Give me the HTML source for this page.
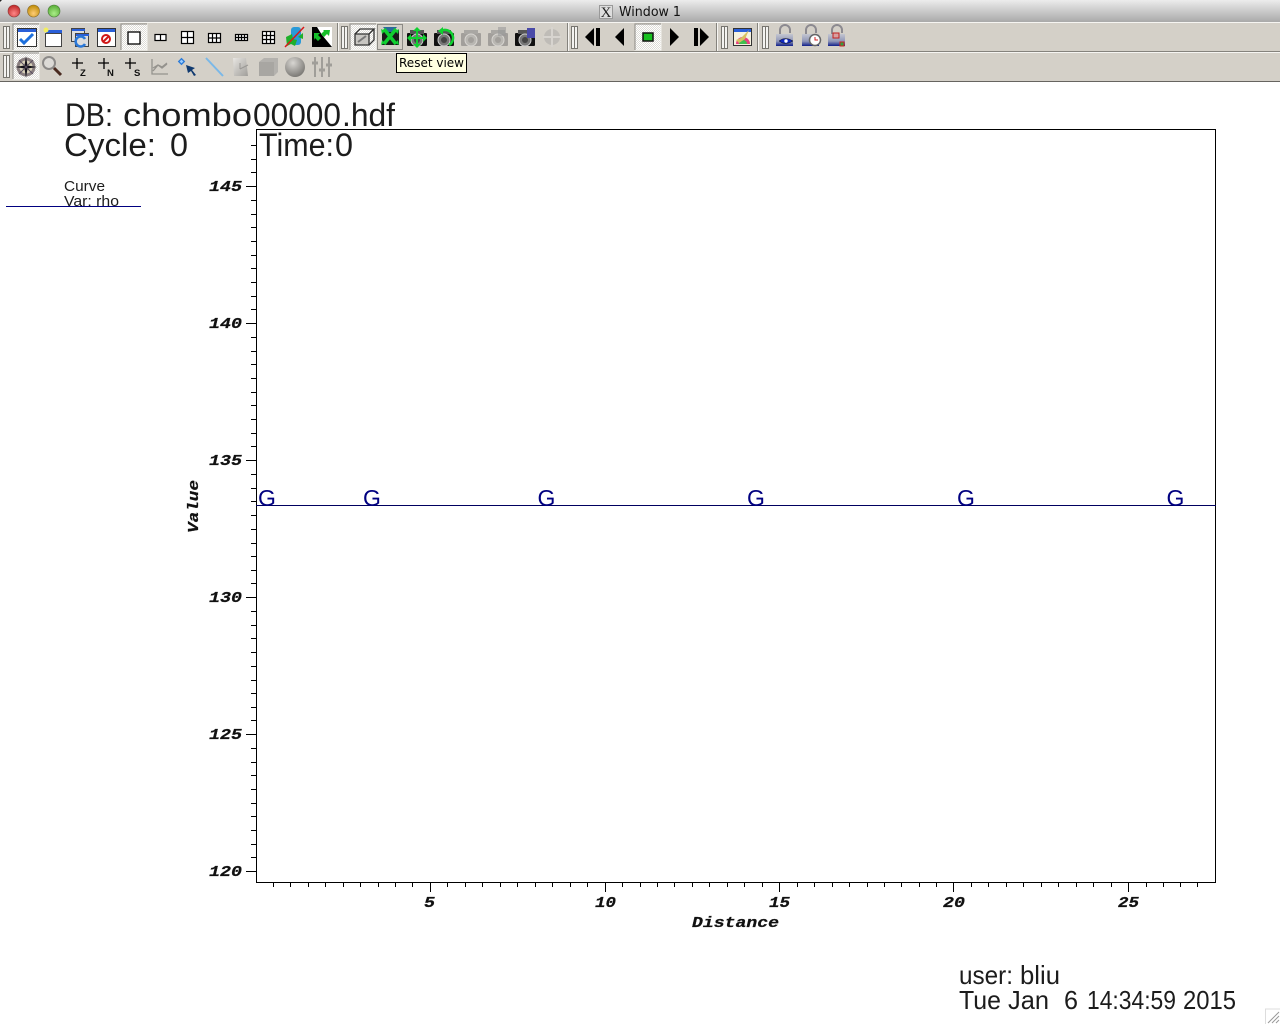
<!DOCTYPE html>
<html><head><meta charset="utf-8"><title>Window 1</title>
<style>html,body{margin:0;padding:0;background:#fff;width:1280px;height:1024px;overflow:hidden}svg{display:block}
.big{font-family:"Liberation Sans",sans-serif;fill:#1c1c1c}
.lb{font-family:"Liberation Mono",monospace;font-weight:bold;font-style:italic;font-size:15px;fill:#111;stroke:#111;stroke-width:.25}
</style></head><body>
<svg width="1280" height="1024" viewBox="0 0 1280 1024" xmlns="http://www.w3.org/2000/svg">
<defs>
<linearGradient id="tb" x1="0" y1="0" x2="0" y2="1"><stop offset="0" stop-color="#ececec"/><stop offset="1" stop-color="#a9a9a9"/></linearGradient>
<pattern id="ck" width="2" height="2" patternUnits="userSpaceOnUse"><rect width="2" height="2" fill="#dedcd7"/><rect width="1" height="1" fill="#fff"/><rect x="1" y="1" width="1" height="1" fill="#fff"/></pattern>
<linearGradient id="gb" x1="0" y1="0" x2="1" y2="1"><stop offset="0" stop-color="#e8e6e2"/><stop offset="1" stop-color="#a09e9a"/></linearGradient>
<linearGradient id="lk" x1="0" y1="0" x2="0" y2="1"><stop offset="0" stop-color="#c4c6d0"/><stop offset=".6" stop-color="#8f96b8"/><stop offset="1" stop-color="#101f8a"/></linearGradient>
<radialGradient id="sp" cx=".4" cy=".3" r=".8"><stop offset="0" stop-color="#d8d6d2"/><stop offset="1" stop-color="#6f6d69"/></radialGradient>
<radialGradient id="r" cx=".5" cy=".7" r=".7"><stop offset="0" stop-color="#f88"/><stop offset="1" stop-color="#b22"/></radialGradient>
<radialGradient id="y" cx=".5" cy=".7" r=".7"><stop offset="0" stop-color="#fc7"/><stop offset="1" stop-color="#b80"/></radialGradient>
<radialGradient id="g" cx=".5" cy=".7" r=".7"><stop offset="0" stop-color="#ae8"/><stop offset="1" stop-color="#5a3"/></radialGradient>
<g id="hd"><rect x="0" y="0" width="6" height="22" fill="#f4f3f0" stroke="#77756f" stroke-width="1"/><line x1="3" y1="0" x2="3" y2="22" stroke="#77756f"/></g>
<g id="act"><rect x="-13" y="-13" width="26" height="26" fill="url(#ck)" stroke="#f5f4f1"/><path d="M-13 13V-13H13" fill="none" stroke="#8c8a85"/></g>
<g id="cam"><rect x="-10" y="-5" width="20" height="13" rx="1" fill="#111"/><rect x="-7" y="-8" width="14" height="4" fill="#555"/><circle cx="0" cy="2" r="6" fill="#777" stroke="#ccc" stroke-width="1"/><circle cx="0" cy="2" r="3" fill="#444"/></g>
<g id="camg" opacity=".45"><rect x="-10" y="-5" width="20" height="13" rx="1" fill="#666"/><rect x="-7" y="-8" width="14" height="4" fill="#777"/><circle cx="0" cy="2" r="6" fill="#999" stroke="#ddd"/><circle cx="0" cy="2" r="3" fill="#666"/></g>
<g id="lock"><path d="M-5 -1V-6a5 5 0 0 1 10 0v3" fill="none" stroke="#8c8a90" stroke-width="2"/><rect x="-9" y="-2" width="17" height="12" fill="url(#lk)"/></g>
</defs>

<!-- title bar -->
<rect width="1280" height="22" fill="url(#tb)"/>
<path d="M0 0h2L0 2z" fill="#222"/>
<circle cx="14" cy="11" r="6" fill="url(#r)" stroke="#8a3a3a" stroke-width=".6"/>
<circle cx="33.500" cy="11" r="6" fill="url(#y)" stroke="#8a6a2a" stroke-width=".6"/>
<circle cx="54" cy="11" r="6" fill="url(#g)" stroke="#4a7a3a" stroke-width=".6"/>
<rect x="599.500" y="5.500" width="13" height="13" fill="#ddd" stroke="#999"/>
<text x="606" y="17" font-family="Liberation Serif,serif" font-size="15" text-anchor="middle" fill="#222">X</text>
<text x="619" y="16" font-family="DejaVu Sans,sans-serif" font-size="13" fill="#111" textLength="62" lengthAdjust="spacingAndGlyphs">Window 1</text>

<!-- toolbars -->
<rect y="22" width="1280" height="60" fill="#d4d0c8"/>
<rect y="22" width="1280" height="1" fill="#f6f5f2"/>
<rect y="51" width="1280" height="1" fill="#85837d"/>
<rect y="52" width="1280" height="1" fill="#f6f5f2"/>
<rect y="81" width="1280" height="1" fill="#66645f"/>
<g fill="#f6f5f2"><rect x="338" y="23" width="1" height="28"/><rect x="568" y="23" width="1" height="28"/><rect x="717" y="23" width="1" height="28"/><rect x="758" y="23" width="1" height="28"/></g>
<g fill="#85837d"><rect x="337" y="23" width="1" height="28"/><rect x="567" y="23" width="1" height="28"/><rect x="716" y="23" width="1" height="28"/><rect x="757" y="23" width="1" height="28"/></g>
<use href="#hd" x="3.500" y="26.500"/><use href="#hd" x="3.500" y="55.500"/>
<use href="#hd" x="341.500" y="26.500"/><use href="#hd" x="571.500" y="26.500"/><use href="#hd" x="721.500" y="26.500"/><use href="#hd" x="762.500" y="26.500"/>

<!-- row 1 -->
<use href="#act" x="26" y="37"/>
<g><rect x="17.500" y="28.500" width="19" height="18" fill="#fff" stroke="#333"/><rect x="18" y="29" width="18" height="3" fill="#2a5fd8"/><path d="M20 39l4 4 9-9" fill="none" stroke="#1c6fdc" stroke-width="3"/></g>
<g><rect x="45.500" y="33.500" width="16" height="13" fill="#fff" stroke="#444"/><rect x="46" y="30" width="16" height="3" fill="#2a5fd8"/><circle cx="46" cy="30" r="2.500" fill="#f2ee60"/></g>
<g><rect x="71.500" y="28.500" width="13" height="13" fill="#ddd" stroke="#444"/><rect x="72" y="29" width="13" height="2" fill="#2a5fd8"/><rect x="75.500" y="33.500" width="13" height="13" fill="#ddd" stroke="#444"/><rect x="76" y="34" width="13" height="2" fill="#2a5fd8"/><path d="M85 39a5 5 0 1 0 0 5" fill="none" stroke="#2a78d8" stroke-width="2.500"/></g>
<g><rect x="97.500" y="28.500" width="18" height="18" fill="#fff" stroke="#333"/><rect x="98" y="29" width="17" height="3" fill="#2a5fd8"/><circle cx="106" cy="39" r="4" fill="none" stroke="#d01818" stroke-width="2"/><line x1="103" y1="42" x2="109" y2="36" stroke="#d01818" stroke-width="2"/></g>
<use href="#act" x="134" y="37"/>
<rect x="128" y="32" width="12" height="12" fill="#fff" stroke="#000" stroke-width="1.300"/>
<g fill="#fff" stroke="#000" stroke-width="1.200"><rect x="155" y="34.500" width="11" height="6"/><line x1="160.500" y1="34" x2="160.500" y2="41"/>
<rect x="181.500" y="31.500" width="12" height="12"/><path d="M187.500 31v13M181 37.500h13"/>
<rect x="208.500" y="33.500" width="12" height="9"/><path d="M212.500 33v10M216.500 33v10M208 38h13"/>
<rect x="235.500" y="34.500" width="12" height="6"/><path d="M238.500 34v7M241.500 34v7M244.500 34v7M235 37.500h13"/>
<rect x="262.500" y="31.500" width="12" height="12"/><path d="M266.500 31v13M270.500 31v13M262 35.500h13M262 39.500h13"/></g>
<g><rect x="291" y="27" width="10" height="18" rx="3" fill="#2a9ad8"/><path d="M286 37l6-3 1 5 4 1-2 6-4-2-4 2z" fill="#1fb02a"/><path d="M303 33v6l-5-2z" fill="#1fb02a"/><line x1="285" y1="47" x2="304" y2="27" stroke="#d81818" stroke-width="1.500"/></g>
<g><rect x="312" y="27" width="20" height="20" fill="#fff"/><path d="M312 27h5l5 8 10 12h-20z" fill="#000"/><path d="M314 33l6 0-2 2 3 3-3 3-3-3-1 2zM330 30l-1 6-2-2-3 3-3-3 3-3-1-1z" fill="#17c02a"/></g>

<use href="#act" x="363" y="37"/>
<g fill="none" stroke="#333" stroke-width="1.300"><path d="M355 34h14v11h-14z" fill="#c8c6c2"/><path d="M355 34l5-5h14l-5 5M369 45l5-5V29"/><path d="M358 42l8-6" stroke="#777" stroke-width="2"/></g>
<rect x="377.500" y="24.500" width="25" height="25" fill="#d4d0c8" stroke="#8c8a85"/>
<g><rect x="382" y="30" width="17" height="15" fill="#1a1a1a"/><path d="M383 27h14l-4 5h-6z" fill="#2a6a9a"/><path d="M384 29l12 15M396 29l-12 15" stroke="#10d030" stroke-width="3.500"/><path d="M381 29l4 2-3 3zM399 29l-4 2 3 3zM381 45l4-2-3-3zM399 45l-4-2 3-3z" fill="#10d030"/></g>

<use href="#cam" x="417" y="38"/>
<path d="M417 29v16M409 38h16" stroke="#10d030" stroke-width="2"/><path d="M413 31l4-4 4 4zM413 44l4 4 4-4zM411 34l-4 4 4 4zM423 34l4 4-4 4z" fill="#10d030"/>
<use href="#cam" x="444" y="38"/>
<path d="M441 31a8 8 0 0 1 8 14" fill="none" stroke="#10d030" stroke-width="2.500"/><path d="M443 27v8l-5-4z" fill="#10d030"/>
<use href="#camg" x="471" y="38"/>
<use href="#camg" x="498" y="38"/><rect x="498" y="27" width="8" height="9" fill="#999" opacity=".6"/>
<use href="#cam" x="525" y="38"/><rect x="527" y="28" width="8" height="10" fill="#4a4aa8"/>
<g opacity=".35"><circle cx="552" cy="37" r="8" fill="#999"/><path d="M552 27v20M543 37h18" stroke="#ddd" stroke-width="2"/></g>

<g fill="#000"><path d="M594 28v18l-9-9z"/><rect x="596" y="28" width="4" height="18"/><path d="M624 28v18l-9-9z"/><path d="M670 28v18l9-9z"/><rect x="694" y="28" width="4" height="18"/><path d="M700 28v18l9-9z"/></g>
<use href="#act" x="648" y="37"/>
<rect x="643" y="33" width="10" height="8" fill="#18c020" stroke="#111" stroke-width="1.500"/>

<g><rect x="733.500" y="28.500" width="18" height="17" fill="#f6f2e0" stroke="#333"/><rect x="734" y="29" width="17" height="3" fill="#2a5fd8"/><path d="M736 44a7 7 0 0 1 14 0z" fill="#e84080"/><path d="M739 44a4 4 0 0 1 8 0z" fill="#40c050"/><path d="M749 30l-8 8-5 2 3 3 6-4z" fill="#d8c060"/></g>

<use href="#lock" x="785" y="36"/><path d="M779 41q6-5 14 0q-8 5-14 0z" fill="#1028c0" stroke="#111" stroke-width=".5"/><circle cx="786" cy="41" r="1.700" fill="#fff"/>
<use href="#lock" x="811" y="36"/><circle cx="815" cy="40" r="5.500" fill="#fff" stroke="#666" stroke-width="1.500"/><path d="M815 37v3h3" stroke="#d02020" fill="none"/>
<use href="#lock" x="837" y="36"/><rect x="833" y="33" width="6" height="5" fill="#d8a0a0" stroke="#c02020"/><rect x="840" y="42" width="4" height="4" fill="#30a040" stroke="#d02020"/>

<!-- row 2 -->
<use href="#act" x="26" y="66"/>
<circle cx="26" cy="67" r="9.500" fill="#8a7f80"/>
<circle cx="26" cy="67" r="6.500" fill="#d8d0b8"/>
<path d="M26 56l1.500 9.500 9.500 1.500-9.500 1.500-1.500 9.500-1.500-9.500-9.500-1.500 9.500-1.500z" fill="#14121a"/>
<path d="M19 60l7 7-7 7M33 60l-7 7 7 7" stroke="#5a5060" fill="none"/>
<g><circle cx="49" cy="63" r="6" fill="#dcdad6" stroke="#8c8a88" stroke-width="2"/><line x1="54" y1="68" x2="61" y2="75" stroke="#4a2a20" stroke-width="3"/></g>
<g stroke="#000" stroke-width="1.300" fill="none"><path d="M77 58v11M72 63h11M104 58v11M98 63h11M130 58v11M125 63h11"/></g>
<g font-family="Liberation Sans,sans-serif" font-weight="bold" font-size="9.500" fill="#111"><text x="80" y="76">Z</text><text x="107" y="76">N</text><text x="134" y="76">S</text></g>
<g fill="none" stroke="#94928d" stroke-width="1.300"><path d="M152 59v15h16M153 71l5-6 4 3 5-4M153 68l5-3 4 2 5-4"/></g>
<rect x="179.500" y="59.500" width="4" height="4" transform="rotate(45 181.500 61.500)" fill="#9cf" stroke="#2a7ad8" stroke-width="1.300"/>
<path d="M186 65l9 3-3 2 4 5-2 1-3-5-3 2z" fill="#103a70"/>
<line x1="206" y1="58" x2="223" y2="76" stroke="#7ab8e8" stroke-width="2"/>
<g><path d="M233 58h13l2 18h-14z" fill="url(#gb)"/><path d="M240 69l8-4M240 63v6" stroke="#9a9894"/></g>
<g><path d="M259 62l5-4h14v14l-4 4h-15z" fill="#b4b2ae"/><path d="M259 62h15v14h-15z" fill="#a8a6a2"/></g>
<circle cx="295" cy="67" r="10" fill="url(#sp)"/>
<g stroke="#a09e99" stroke-width="2"><path d="M315 57v20M322 57v20M329 57v20"/><path d="M312 63h6M319 70h6M326 65h6" stroke-width="3"/></g>

<!-- tooltip -->
<rect x="396.500" y="53.500" width="70" height="19" fill="#ffffe1" stroke="#000"/>
<text x="399" y="67" font-family="DejaVu Sans,sans-serif" font-size="12" fill="#000" textLength="65" lengthAdjust="spacingAndGlyphs">Reset view</text>

<!-- header text -->
<text class="big" y="126" font-size="32"><tspan x="65" textLength="48" lengthAdjust="spacingAndGlyphs">DB:</tspan> <tspan x="123" textLength="129" lengthAdjust="spacingAndGlyphs">chombo</tspan><tspan x="253" textLength="88" lengthAdjust="spacingAndGlyphs">00000</tspan><tspan x="342" textLength="53" lengthAdjust="spacingAndGlyphs">.hdf</tspan></text>
<text class="big" y="156" font-size="32"><tspan x="64" textLength="92" lengthAdjust="spacingAndGlyphs">Cycle:</tspan> <tspan x="170" textLength="18" lengthAdjust="spacingAndGlyphs">0</tspan></text>
<rect x="256.500" y="129.500" width="959" height="753" fill="none" stroke="#000"/>
<text class="big" y="156" font-size="32"><tspan x="259" textLength="75" lengthAdjust="spacingAndGlyphs">Time:</tspan><tspan x="335" textLength="18" lengthAdjust="spacingAndGlyphs">0</tspan></text>
<text class="big" x="64" y="191" font-size="14.500" textLength="41" lengthAdjust="spacingAndGlyphs">Curve</text>
<text class="big" x="64" y="206" font-size="14.500" textLength="55" lengthAdjust="spacingAndGlyphs">Var: rho</text>
<line x1="6" y1="206.500" x2="141" y2="206.500" stroke="#000080"/>

<!-- y ticks -->
<path stroke="#000" fill="none" d="M246 186.500h10M246 323.500h10M246 460.500h10M246 597.500h10M246 734.500h10M246 871.500h10
M251 145.500h5M251 159.500h5M251 172.500h5M251 200.500h5M251 214.500h5M251 227.500h5M251 241.500h5M251 255.500h5M251 268.500h5M251 282.500h5M251 296.500h5M251 309.500h5
M251 337.500h5M251 351.500h5M251 364.500h5M251 378.500h5M251 392.500h5M251 405.500h5M251 419.500h5M251 433.500h5M251 446.500h5
M251 474.500h5M251 488.500h5M251 501.500h5M251 515.500h5M251 529.500h5M251 543.500h5M251 556.500h5M251 570.500h5M251 583.500h5
M251 611.500h5M251 625.500h5M251 638.500h5M251 652.500h5M251 666.500h5M251 680.500h5M251 693.500h5M251 707.500h5M251 720.500h5
M251 748.500h5M251 762.500h5M251 775.500h5M251 789.500h5M251 803.500h5M251 816.500h5M251 830.500h5M251 844.500h5M251 857.500h5"/>
<!-- x ticks -->
<path stroke="#000" fill="none" d="M430.500 882v10M605.500 882v10M779.500 882v10M953.500 882v10M1128.500 882v10
M273.500 882v5M290.500 882v5M308.500 882v5M325.500 882v5M343.500 882v5M360.500 882v5M378.500 882v5M395.500 882v5M412.500 882v5
M447.500 882v5M465.500 882v5M482.500 882v5M500.500 882v5M517.500 882v5M535.500 882v5M552.500 882v5M570.500 882v5M587.500 882v5
M622.500 882v5M640.500 882v5M657.500 882v5M674.500 882v5M692.500 882v5M709.500 882v5M727.500 882v5M744.500 882v5M762.500 882v5
M797.500 882v5M814.500 882v5M832.500 882v5M849.500 882v5M867.500 882v5M884.500 882v5M901.500 882v5M919.500 882v5M936.500 882v5
M971.500 882v5M988.500 882v5M1006.500 882v5M1023.500 882v5M1041.500 882v5M1058.500 882v5M1076.500 882v5M1093.500 882v5M1111.500 882v5
M1146.500 882v5M1163.500 882v5M1180.500 882v5M1197.500 882v5"/>

<g>
<text x="209" y="191" class="lb" textLength="33" lengthAdjust="spacingAndGlyphs">145</text>
<text x="209" y="328" class="lb" textLength="33" lengthAdjust="spacingAndGlyphs">140</text>
<text x="209" y="465" class="lb" textLength="33" lengthAdjust="spacingAndGlyphs">135</text>
<text x="209" y="602" class="lb" textLength="33" lengthAdjust="spacingAndGlyphs">130</text>
<text x="209" y="739" class="lb" textLength="33" lengthAdjust="spacingAndGlyphs">125</text>
<text x="209" y="876" class="lb" textLength="33" lengthAdjust="spacingAndGlyphs">120</text>
<text x="424" y="907" class="lb" textLength="11" lengthAdjust="spacingAndGlyphs">5</text>
<text x="595" y="907" class="lb" textLength="21" lengthAdjust="spacingAndGlyphs">10</text>
<text x="769" y="907" class="lb" textLength="21" lengthAdjust="spacingAndGlyphs">15</text>
<text x="943" y="907" class="lb" textLength="22" lengthAdjust="spacingAndGlyphs">20</text>
<text x="1118" y="907" class="lb" textLength="21" lengthAdjust="spacingAndGlyphs">25</text>
<text x="692" y="927" class="lb" textLength="87" lengthAdjust="spacingAndGlyphs">Distance</text>
<text transform="translate(198 533) rotate(-90)" class="lb" textLength="53" lengthAdjust="spacingAndGlyphs">Value</text>
</g>

<!-- curve -->
<line x1="256" y1="505.500" x2="1216" y2="505.500" stroke="#000060"/>
<g font-family="Liberation Sans,sans-serif" font-size="23" fill="#000080" text-anchor="middle">
<text x="267" y="506">G</text><text x="372" y="506">G</text><text x="546.500" y="506">G</text><text x="756" y="506">G</text><text x="966" y="506">G</text><text x="1175.500" y="506">G</text>
</g>

<text class="big" y="984" font-size="26"><tspan x="959" textLength="54" lengthAdjust="spacingAndGlyphs">user:</tspan> <tspan x="1020" textLength="40" lengthAdjust="spacingAndGlyphs">bliu</tspan></text>
<text class="big" y="1009" font-size="26"><tspan x="959" textLength="42" lengthAdjust="spacingAndGlyphs">Tue</tspan> <tspan x="1008" textLength="41" lengthAdjust="spacingAndGlyphs">Jan</tspan> <tspan x="1064" textLength="14" lengthAdjust="spacingAndGlyphs">6</tspan> <tspan x="1087" textLength="89" lengthAdjust="spacingAndGlyphs">14:34:59</tspan> <tspan x="1183" textLength="53" lengthAdjust="spacingAndGlyphs">2015</tspan></text>

<!-- resize grip -->
<path d="M1265.500 1024v-15h14.500" fill="none" stroke="#ddd"/>
<path d="M1268 1023l11-11M1272 1023l7-7M1276 1023l3-3" stroke="#999" fill="none"/>
</svg>
</body></html>
